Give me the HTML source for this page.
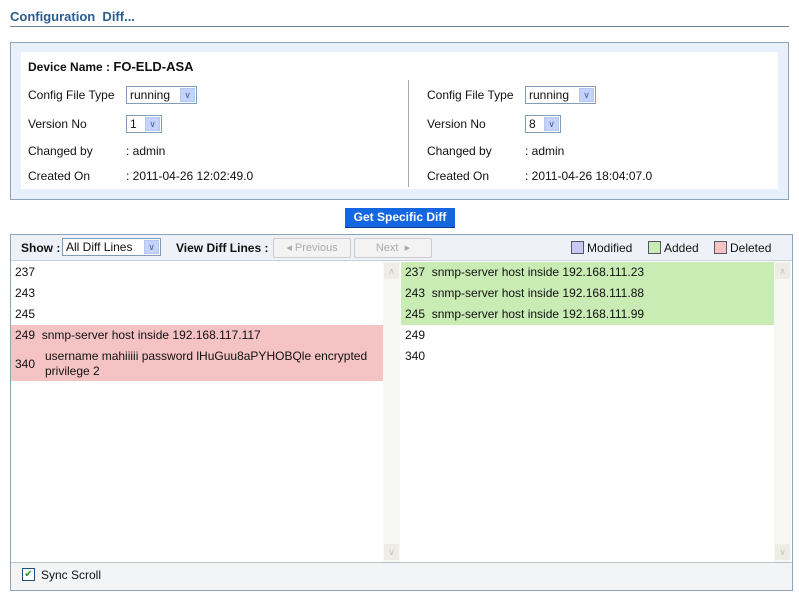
<!DOCTYPE html><html><head><style>
body{margin:0;width:799px;height:600px;background:#fff;font-family:"Liberation Sans",sans-serif;font-size:12px;color:#111;position:relative;overflow:hidden}
.a{position:absolute}
.sel{position:absolute;border:1px solid #7f9db9;background:#fff;height:18px;box-sizing:border-box;line-height:16px;padding-left:3px}
.sel i{position:absolute;right:1px;top:1px;width:15px;height:14px;background:#c3d3fd;border:1px solid #b6c8f0;box-sizing:border-box;font-style:normal;font-size:9px;text-align:center;line-height:12px;color:#4d6185}
.row{position:absolute;height:21px;line-height:21px;padding-left:4px;box-sizing:border-box}
.g{background:#c9ebb4}.p{background:#f5c3c3}
.sb{position:absolute;width:17px;background:#f7f7f3;top:261px;height:301px}
.sb b{position:absolute;left:1px;width:15px;height:16px;background:#eeede5;color:#c0c0c0;font-size:9px;text-align:center;line-height:16px;font-weight:normal}
</style></head><body>
<div class="a" style="left:10px;top:9px;font-size:13px;font-weight:bold;color:#2c5d8e">Configuration&nbsp; Diff...</div>
<div class="a" style="left:10px;top:26px;width:779px;height:1px;background:#6a7f94"></div>
<div class="a" style="left:10px;top:42px;width:777px;height:156px;border:1px solid #8ea4b9;background:#e8f0fb"></div>
<div class="a" style="left:21px;top:52px;width:757px;height:137px;background:#fff"></div>
<div class="a" style="left:28px;top:59px;font-weight:bold;font-size:12px">Device Name : <span style="font-size:13px">FO-ELD-ASA</span></div>
<div class="a" style="left:28px;top:88px">Config File Type</div>
<div class="sel" style="left:126px;top:86px;width:71px">running<i>&#8744;</i></div>
<div class="a" style="left:28px;top:117px">Version No</div>
<div class="sel" style="left:126px;top:115px;width:36px">1<i>&#8744;</i></div>
<div class="a" style="left:28px;top:144px">Changed by</div><div class="a" style="left:126px;top:144px">: admin</div>
<div class="a" style="left:28px;top:169px">Created On</div><div class="a" style="left:126px;top:169px">: 2011-04-26 12:02:49.0</div>
<div class="a" style="left:408px;top:80px;width:1px;height:107px;background:#aaa"></div>
<div class="a" style="left:427px;top:88px">Config File Type</div>
<div class="sel" style="left:525px;top:86px;width:71px">running<i>&#8744;</i></div>
<div class="a" style="left:427px;top:117px">Version No</div>
<div class="sel" style="left:525px;top:115px;width:36px">8<i>&#8744;</i></div>
<div class="a" style="left:427px;top:144px">Changed by</div><div class="a" style="left:525px;top:144px">: admin</div>
<div class="a" style="left:427px;top:169px">Created On</div><div class="a" style="left:525px;top:169px">: 2011-04-26 18:04:07.0</div>
<div class="a" style="left:345px;top:208px;width:110px;height:19px;background:#1467e0;color:#fff;font-weight:bold;text-align:center;line-height:19px;border-bottom:1px solid #0a3a90">Get Specific Diff</div>
<div class="a" style="left:10px;top:234px;width:781px;height:355px;border:1px solid #8ea4b9"></div>
<div class="a" style="left:11px;top:235px;width:781px;height:25px;background:#eef2f8;border-bottom:1px solid #c8d0da"></div>
<div class="a" style="left:21px;top:241px;font-weight:bold">Show :</div>
<div class="sel" style="left:62px;top:238px;width:99px">All Diff Lines<i>&#8744;</i></div>
<div class="a" style="left:176px;top:241px;font-weight:bold">View Diff Lines :</div>
<div class="a" style="left:273px;top:238px;width:76px;height:18px;border:1px solid #ccc;border-radius:2px;background:#f3f3f3;color:#aaa;text-align:center;line-height:18px;font-size:11px">&#9666; Previous</div>
<div class="a" style="left:354px;top:238px;width:76px;height:18px;border:1px solid #ccc;border-radius:2px;background:#f3f3f3;color:#aaa;text-align:center;line-height:18px;font-size:11px">Next &nbsp;&#9656;</div>
<div class="a" style="left:571px;top:241px;width:11px;height:11px;border:1px solid #556;background:#c8c8f5"></div><div class="a" style="left:587px;top:241px">Modified</div>
<div class="a" style="left:648px;top:241px;width:11px;height:11px;border:1px solid #556;background:#c9ebb4"></div><div class="a" style="left:664px;top:241px">Added</div>
<div class="a" style="left:714px;top:241px;width:11px;height:11px;border:1px solid #556;background:#f5c3c3"></div><div class="a" style="left:730px;top:241px">Deleted</div>
<div class="row" style="left:11px;top:262px;width:372px">237</div>
<div class="row" style="left:11px;top:283px;width:372px">243</div>
<div class="row" style="left:11px;top:304px;width:372px">245</div>
<div class="row p" style="left:11px;top:325px;width:372px">249&nbsp; snmp-server host inside 192.168.117.117</div>
<div class="row p" style="left:11px;top:346px;width:372px;height:35px;line-height:15px;padding-top:3px"><span style="float:left;padding-top:8px">340</span><div style="margin-left:30px">username mahiiiii password lHuGuu8aPYHOBQle encrypted privilege 2</div></div>
<div class="sb" style="left:383px"><b style="top:2px">&#8743;</b><b style="top:283px">&#8744;</b></div>
<div class="row g" style="left:401px;top:262px;width:373px">237&nbsp; snmp-server host inside 192.168.111.23</div>
<div class="row g" style="left:401px;top:283px;width:373px">243&nbsp; snmp-server host inside 192.168.111.88</div>
<div class="row g" style="left:401px;top:304px;width:373px">245&nbsp; snmp-server host inside 192.168.111.99</div>
<div class="row" style="left:401px;top:325px;width:373px">249</div>
<div class="row" style="left:401px;top:346px;width:373px">340</div>
<div class="sb" style="left:774px"><b style="top:2px">&#8743;</b><b style="top:283px">&#8744;</b></div>
<div class="a" style="left:11px;top:562px;width:781px;height:27px;background:#f3f4f6;border-top:1px solid #b8c0c8"></div>
<div class="a" style="left:22px;top:568px;width:11px;height:11px;border:1px solid #1c5180;background:#fff;color:#2a9a2a;font-size:10px;line-height:11px;text-align:center">&#10004;</div>
<div class="a" style="left:41px;top:568px">Sync Scroll</div>
</body></html>
